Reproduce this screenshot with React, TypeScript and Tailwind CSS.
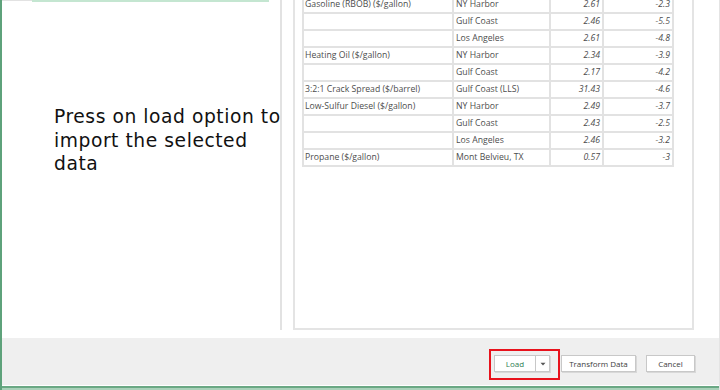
import React from "react";

type Row = { a: string; b: string; c: string; d: string };

const rows: Row[] = [
  { a: "Gasoline (RBOB) ($/gallon)", b: "NY Harbor", c: "2.61", d: "-2.3" },
  { a: "", b: "Gulf Coast", c: "2.46", d: "-5.5" },
  { a: "", b: "Los Angeles", c: "2.61", d: "-4.8" },
  { a: "Heating Oil ($/gallon)", b: "NY Harbor", c: "2.34", d: "-3.9" },
  { a: "", b: "Gulf Coast", c: "2.17", d: "-4.2" },
  { a: "3:2:1 Crack Spread ($/barrel)", b: "Gulf Coast (LLS)", c: "31.43", d: "-4.6" },
  { a: "Low-Sulfur Diesel ($/gallon)", b: "NY Harbor", c: "2.49", d: "-3.7" },
  { a: "", b: "Gulf Coast", c: "2.43", d: "-2.5" },
  { a: "", b: "Los Angeles", c: "2.46", d: "-3.2" },
  { a: "Propane ($/gallon)", b: "Mont Belvieu, TX", c: "0.57", d: "-3" },
];

export default function App() {
  return (
    <div className="w-[720px] h-[390px] bg-white flex flex-col overflow-hidden border-l-2 border-[#5ea27b] border-r border-r-[#e4e4e4]">
      <div className="h-[338px] flex shrink-0">
        {/* left pane */}
        <div className="w-[280px] h-[330px] border-r-[2px] border-[#e2e2e2] flex flex-col">
          <div className="flex items-start">
            <div className="w-[30px] h-[1px] bg-[#e2e2e2]" />
            <div className="w-[237px] h-[2px] bg-[#c4e6d1]" />
          </div>
          <div
            className="pl-[52px] mt-[103px] text-[18.7px] leading-[23.5px] tracking-[0.55px] text-[#111]"
            style={{ fontFamily: '"DejaVu Sans", sans-serif' }}
          >
            <div className="whitespace-nowrap">Press on load option to</div>
            <div className="whitespace-nowrap">import the selected</div>
            <div className="whitespace-nowrap">data</div>
          </div>
        </div>
        {/* preview panel */}
        <div className="ml-[11px] w-[401px] h-[330px] border-l-2 border-r-2 border-b-2 border-[#e4e4e4] overflow-hidden">
          <table
            className="ml-[7px] mt-[-5px] border-collapse text-[8.7px] text-[#4d4d4d]"
            style={{ fontFamily: '"Open Sans", "Liberation Sans", sans-serif' }}
          >
            <tbody>
              {rows.map((r, i) => (
                <tr key={i} className="h-[17px]">
                  <td className="w-[150px] border-2 border-[#e2e2e2] px-[1px] pt-[1px] whitespace-nowrap">{r.a}</td>
                  <td className="w-[97px] border-2 border-[#e2e2e2] px-[2px] pt-[1px] whitespace-nowrap">{r.b}</td>
                  <td className="w-[53px] border-2 border-[#e2e2e2] px-[2px] pt-[1px] text-right italic">{r.c}</td>
                  <td className="w-[70px] border-2 border-[#e2e2e2] px-[2px] pt-[1px] text-right italic">{r.d}</td>
                </tr>
              ))}
            </tbody>
          </table>
        </div>
        <div className="flex-1" />
      </div>
      {/* footer */}
      <div
        className="h-[47px] bg-[#efefef] flex justify-end items-start pt-[17px] pr-[24px] text-[8px]"
        style={{ fontFamily: '"Open Sans", "Liberation Sans", sans-serif' }}
      >
        <div className="relative flex">
          <div className="absolute left-[-5px] right-[-10px] top-[-6px] bottom-[-8px] border-[2.5px] border-[#e8121c]" />
          <div className="flex h-[17px] bg-white border border-[#c8c8c8] shadow-[1px_1px_0_#d8d8d8]">
            <div className="w-[40px] flex items-center justify-center text-[#2f7d52]">Load</div>
            <div className="w-[14px] border-l border-[#c8c8c8] flex items-center justify-center">
              <svg width="6" height="4" viewBox="0 0 6 4">
                <path d="M0.5 0.8 L5.5 0.8 L3 3.4 Z" fill="#555" />
              </svg>
            </div>
          </div>
        </div>
        <div className="ml-[11px] w-[75px] h-[17px] bg-white border border-[#c8c8c8] shadow-[1px_1px_0_#d8d8d8] flex items-center justify-center text-[#404040]">
          Transform Data
        </div>
        <div className="ml-[10px] w-[49px] h-[17px] bg-white border border-[#c8c8c8] shadow-[1px_1px_0_#d8d8d8] flex items-center justify-center text-[#404040]">
          Cancel
        </div>
      </div>
      <div className="h-[1px] bg-white" />
      <div className="h-[2px] bg-[#6aa884]" />
      <div className="flex-1 bg-[#a9d1b9]" />
    </div>
  );
}
